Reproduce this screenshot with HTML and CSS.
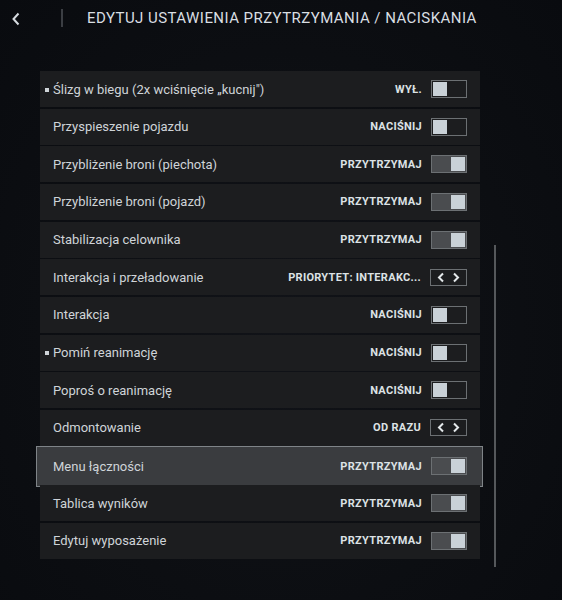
FILE: index.html
```html
<!DOCTYPE html>
<html lang="pl">
<head>
<meta charset="utf-8">
<link rel="stylesheet" href="styles.css">
</head>
<body>
<div class="page">
  <header class="header">
    <svg class="back" width="10" height="14" viewBox="0 0 10 14"><path d="M7.5 1.5 L2.5 7 L7.5 12.5" fill="none" stroke="#d6dbe0" stroke-width="2"/></svg>
    <span class="divider"></span>
    <h1 class="title">EDYTUJ USTAWIENIA PRZYTRZYMANIA / NACISKANIA</h1>
  </header>
  <div class="content">
    <div class="list">
      <div class="row"><span class="label"><i class="dot"></i>Ślizg w biegu (2x wciśnięcie „kucnij")</span><span class="value">WYŁ.</span><span class="toggle"></span></div>
      <div class="row"><span class="label">Przyspieszenie pojazdu</span><span class="value">NACIŚNIJ</span><span class="toggle"></span></div>
      <div class="row"><span class="label">Przybliżenie broni (piechota)</span><span class="value">PRZYTRZYMAJ</span><span class="toggle on"></span></div>
      <div class="row"><span class="label">Przybliżenie broni (pojazd)</span><span class="value">PRZYTRZYMAJ</span><span class="toggle on"></span></div>
      <div class="row"><span class="label">Stabilizacja celownika</span><span class="value">PRZYTRZYMAJ</span><span class="toggle on"></span></div>
      <div class="row"><span class="label">Interakcja i przeładowanie</span><span class="value">PRIORYTET: INTERAKC...</span><span class="arrows"><svg width="37" height="17" viewBox="0 0 37 17"><path d="M13 4.5 L9 8.5 L13 12.5 M24 4.5 L28 8.5 L24 12.5" fill="none" stroke="#e4e8ea" stroke-width="2"/></svg></span></div>
      <div class="row"><span class="label">Interakcja</span><span class="value">NACIŚNIJ</span><span class="toggle"></span></div>
      <div class="row"><span class="label"><i class="dot"></i>Pomiń reanimację</span><span class="value">NACIŚNIJ</span><span class="toggle"></span></div>
      <div class="row"><span class="label">Poproś o reanimację</span><span class="value">NACIŚNIJ</span><span class="toggle"></span></div>
      <div class="row"><span class="label">Odmontowanie</span><span class="value">OD RAZU</span><span class="arrows"><svg width="37" height="17" viewBox="0 0 37 17"><path d="M13 4.5 L9 8.5 L13 12.5 M24 4.5 L28 8.5 L24 12.5" fill="none" stroke="#e4e8ea" stroke-width="2"/></svg></span></div>
      <div class="row active"><span class="label">Menu łączności</span><span class="value">PRZYTRZYMAJ</span><span class="toggle on"></span></div>
      <div class="row"><span class="label">Tablica wyników</span><span class="value">PRZYTRZYMAJ</span><span class="toggle on"></span></div>
      <div class="row"><span class="label">Edytuj wyposażenie</span><span class="value">PRZYTRZYMAJ</span><span class="toggle on"></span></div>
    </div>
    <div class="scrolltrack"><div class="scrollbar"></div></div>
  </div>
</div>
</body>
</html>
```
FILE: styles.css
```css
html, body {
  margin: 0;
  padding: 0;
}
body {
  width: 562px;
  height: 600px;
  overflow: hidden;
  background: radial-gradient(ellipse at 50% 55%, #111318 0%, #0c0e12 60%, #090b0f 100%);
  font-family: Roboto, "Liberation Sans", sans-serif;
  color: #d3d8dc;
}
.page {
  width: 562px;
  height: 600px;
}
.header {
  display: flex;
  align-items: center;
  height: 36px;
}
.back {
  margin-left: 11px;
  margin-top: 1px;
}
.divider {
  width: 2px;
  height: 18px;
  background: #3b3e43;
  margin-left: 40px;
}
.title {
  margin: 0 0 0 24px;
  font-size: 15px;
  font-weight: 400;
  letter-spacing: 0.45px;
  color: #d9dee2;
}
.content {
  display: flex;
  margin-top: 35px;
}
.list {
  margin-left: 40px;
  width: 440px;
  display: flex;
  flex-direction: column;
  gap: 1.67px;
}
.row {
  height: 36px;
  background: #1c1d1f;
  display: flex;
  align-items: center;
  box-sizing: border-box;
  padding: 0 13px 0 13px;
  position: relative;
}
.row.active {
  background: #3a3c3f;
  outline: 1px solid #7f8488;
  outline-offset: 0;
  margin: -1px -2px -2px -3px;
  height: 39px;
  padding-left: 16px;
  padding-right: 15px;
  box-shadow: 0 0 0 1px #2a2c2f;
}
.label {
  flex: 1;
  font-size: 13px;
  color: #cfd4d8;
  position: relative;
}
.dot {
  position: absolute;
  left: -8px;
  top: 6px;
  width: 4px;
  height: 4px;
  background: #cfd4d8;
}
.value {
  font-size: 11px;
  font-weight: 700;
  color: #dde2e5;
  margin-right: 9px;
  letter-spacing: 0.3px;
}
.toggle {
  width: 36px;
  height: 18px;
  box-sizing: border-box;
  border: 1px solid #6c7073;
  display: flex;
  align-items: center;
  padding: 1px;
}
.toggle::before {
  content: "";
  width: 14px;
  height: 14px;
  background: #c9d1d7;
}
.toggle.on {
  background: #4a4c4f;
  justify-content: flex-end;
}
.arrows {
  width: 37px;
  height: 17px;
  box-sizing: border-box;
  border: 1px solid #6c7073;
  display: flex;
  align-items: center;
  justify-content: center;
}
.arrows svg {
  display: block;
  margin: -1px;
}
.scrolltrack {
  margin-left: 14px;
  padding-top: 174px;
}
.scrollbar {
  width: 2px;
  height: 322px;
  background: #55585b;
}
```
